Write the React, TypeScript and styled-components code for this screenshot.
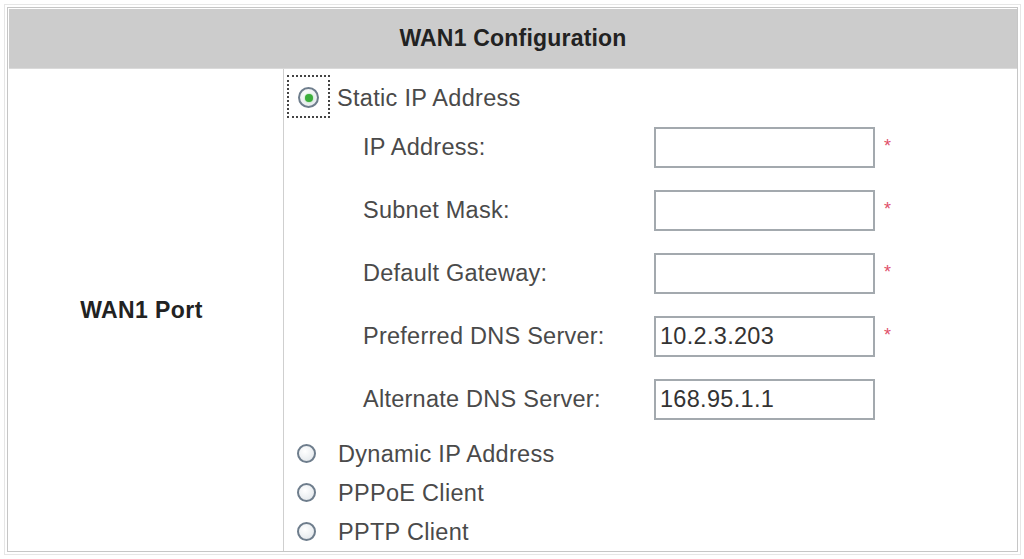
import React from "react";
import styled, { createGlobalStyle } from "styled-components";

const GlobalStyle = createGlobalStyle`
  html, body {
    margin: 0;
    padding: 0;
    background: #ffffff;
  }
  body {
    font-family: "Liberation Sans", Arial, sans-serif;
  }
`;

const Page = styled.div`
  width: 1024px;
  height: 559px;
  box-sizing: border-box;
  padding: 4px 0 0 4px;
  background: #ffffff;
`;

const Frame = styled.div`
  width: 1017px;
  height: 551px;
  box-sizing: border-box;
  border: 1px solid #e6e6e6;
  padding: 2px;
`;

const Table = styled.div`
  height: 100%;
  box-sizing: border-box;
  border: 1px solid #c6c6c6;
  display: grid;
  grid-template-rows: 61px 1fr;
  grid-template-columns: 276px 1fr;
`;

const Header = styled.div`
  grid-column: 1 / span 2;
  margin: 1px 0 0 1px;
  background: #cccccc;
  border-bottom: 1px solid #dadada;
  display: flex;
  align-items: center;
  justify-content: center;
  font-weight: bold;
  font-size: 23px;
  color: #222222;
  letter-spacing: 0.2px;
`;

const LabelCell = styled.div`
  border-right: 1px solid #cfcfcf;
  display: flex;
  align-items: center;
  justify-content: center;
  padding-right: 8px;
  font-weight: bold;
  font-size: 23px;
  color: #222222;
  letter-spacing: 0.4px;
`;

const ValueCell = styled.div`
  display: flex;
  flex-direction: column;
  padding: 5px 0 0 3px;
  color: #4a4a4a;
  font-size: 23.5px;
`;

const OptionRow = styled.label<{ $height?: number }>`
  display: flex;
  align-items: center;
  height: ${(p) => p.$height ?? 39}px;
  padding-left: 10px;
  gap: 22px;
  cursor: pointer;
`;

const FocusBox = styled.span`
  display: flex;
  align-items: center;
  justify-content: center;
  width: 43px;
  height: 43px;
  box-sizing: border-box;
  margin-left: -10px;
  margin-right: -15px;
  border: 2px dotted #444444;
`;

const Radio = styled.span<{ $checked?: boolean }>`
  position: relative;
  display: inline-block;
  width: ${(p) => (p.$checked ? 21 : 19)}px;
  height: ${(p) => (p.$checked ? 21 : 19)}px;
  margin-top: 2px;
  box-sizing: border-box;
  border-radius: 50%;
  border: 2px solid #6e7d8c;
  background: radial-gradient(circle at 40% 35%, #ffffff 0%, #e8ecef 70%, #d4dbe1 100%);

  &::after {
    content: "";
    display: ${(p) => (p.$checked ? "block" : "none")};
    position: absolute;
    left: 50%;
    top: 50%;
    width: 8px;
    height: 8px;
    margin: -4px 0 0 -4px;
    border-radius: 50%;
    background: #3cae3c;
    box-shadow: 0 0 2px #7ccf7c;
  }
`;

const OptionText = styled.span`
  letter-spacing: 0.3px;
  padding-top: 3px;
`;

const Fields = styled.div`
  display: grid;
  grid-template-columns: 291px 221px auto;
  grid-auto-rows: 63px;
  align-items: center;
  padding-left: 76px;
  margin-top: -3px;
  margin-bottom: 2px;
`;

const FieldLabel = styled.span`
  letter-spacing: 0.25px;
`;

const TextBox = styled.input`
  width: 221px;
  height: 41px;
  box-sizing: border-box;
  border: 2px solid #a3a9ae;
  padding: 0 4px;
  font-family: "Liberation Sans", Arial, sans-serif;
  font-size: 23.5px;
  letter-spacing: 0.3px;
  color: #333333;
  background: #ffffff;
  outline: none;
`;

const Required = styled.span`
  color: #e0506a;
  font-size: 18px;
  padding-left: 9px;
  padding-bottom: 2px;
`;

type Field = { label: string; value: string; required: boolean };

const fields: Field[] = [
  { label: "IP Address:", value: "", required: true },
  { label: "Subnet Mask:", value: "", required: true },
  { label: "Default Gateway:", value: "", required: true },
  { label: "Preferred DNS Server:", value: "10.2.3.203", required: true },
  { label: "Alternate DNS Server:", value: "168.95.1.1", required: false },
];

const otherModes = ["Dynamic IP Address", "PPPoE Client", "PPTP Client"];

const App = () => {
  return (
    <Page>
      <GlobalStyle />
      <Frame>
        <Table>
          <Header>WAN1 Configuration</Header>
          <LabelCell>WAN1 Port</LabelCell>
          <ValueCell>
            <OptionRow $height={45}>
              <FocusBox>
                <Radio $checked />
              </FocusBox>
              <OptionText>Static IP Address</OptionText>
            </OptionRow>
            <Fields>
              {fields.map((f) => (
                <React.Fragment key={f.label}>
                  <FieldLabel>{f.label}</FieldLabel>
                  <TextBox defaultValue={f.value} />
                  <Required>{f.required ? "*" : ""}</Required>
                </React.Fragment>
              ))}
            </Fields>
            {otherModes.map((m) => (
              <OptionRow key={m}>
                <Radio />
                <OptionText>{m}</OptionText>
              </OptionRow>
            ))}
          </ValueCell>
        </Table>
      </Frame>
    </Page>
  );
};

export default App;
